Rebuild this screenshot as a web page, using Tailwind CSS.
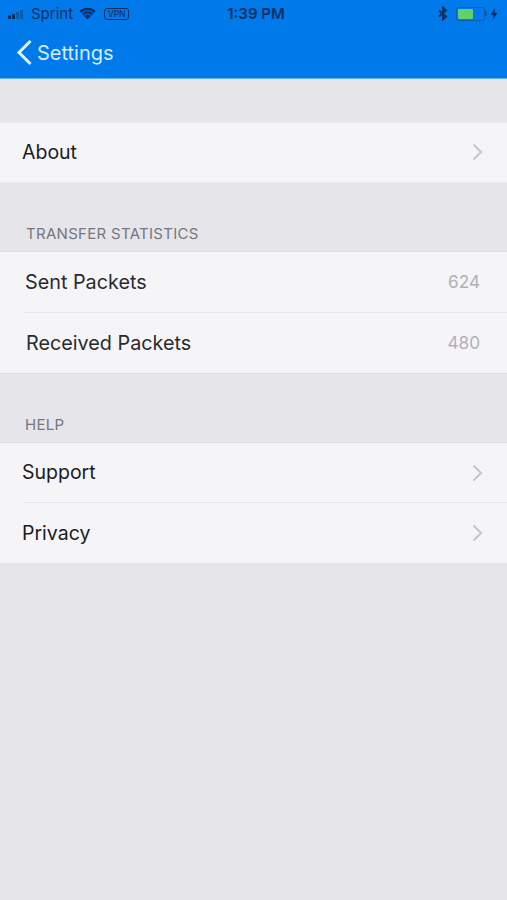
<!DOCTYPE html>
<html lang="en">
<head>
  <meta charset="UTF-8" />
  <meta name="viewport" content="width=device-width, initial-scale=1" />
  <title>Settings</title>
  <script src="https://cdn.jsdelivr.net/npm/@tailwindcss/browser@4"></script>
</head>
<body class="bg-[#e5e5ea] min-h-screen font-['Inter','Liberation_Sans',sans-serif]">
  <!-- Header -->
  <header class="h-[79px] bg-[#007aeb] border-b border-[#5ab0f2]">
    <div class="h-[27px] flex items-center justify-between pl-[8px] pr-[9px] text-[#0c2f63]">
      <div class="flex items-center w-[186px]">
        <svg width="20" height="10" viewBox="0 0 20 10" class="mr-[3px]">
          <rect x="0" y="6.500" width="3" height="3.500" fill="#0c2f63"/>
          <rect x="4" y="5" width="3" height="5" fill="#0c2f63"/>
          <rect x="8" y="3" width="3" height="7" fill="#0c2f63" fill-opacity=".4"/>
          <rect x="12" y="1" width="3" height="9" fill="#0c2f63" fill-opacity=".4"/>
        </svg>
        <span class="text-[15px] leading-none">Sprint</span>
        <svg width="17" height="13" viewBox="0 0 17 13" class="ml-[6px]">
          <path d="M8.500 12.500 L0.500 4 A11.500 11.500 0 0 1 16.500 4 Z" fill="#0c2f63"/>
          <path d="M3 5.800 A8 8 0 0 1 14 5.800" fill="none" stroke="#007aeb" stroke-width="1"/>
          <path d="M5.200 8.200 A5 5 0 0 1 11.800 8.200" fill="none" stroke="#007aeb" stroke-width="1"/>
        </svg>
        <span class="ml-[8px] w-[25px] h-[12px] rounded-[3px] border border-[#0c2f63] text-[8.500px] leading-[10px] text-center font-medium">VPN</span>
      </div>
      <span class="text-[15px] leading-none font-semibold">1:39 PM</span>
      <div class="flex items-center justify-end w-[180px]">
        <svg width="10" height="15" viewBox="0 0 10 15">
          <path d="M1 4.500 L8 10.500 L5 13.500 L5 1.500 L8 4.500 L1 10.500" fill="none" stroke="#0c2f63" stroke-width="1.800"/>
        </svg>
        <div class="ml-[8px] w-[29px] h-[14px] rounded-[3px] border border-[#0b5fae] p-[1px]">
          <div class="w-[15px] h-full bg-[#5fd36a] rounded-[1px]"></div>
        </div>
        <div class="w-[2px] h-[5px] bg-[#0b5fae] rounded-r-[1px]"></div>
        <svg width="8" height="12" viewBox="0 0 8 12" class="ml-[3px]">
          <path d="M5 0 L0.500 7 L3.500 7 L2.800 12 L7.500 4.800 L4.400 4.800 Z" fill="#0c2f63"/>
        </svg>
      </div>
    </div>
    <div class="h-[51px] flex items-center pl-[16px] text-[#d4ecfd]">
      <svg width="17" height="27" viewBox="0 0 17 27">
        <path d="M14.500 2 L3 13.500 L14.500 25" fill="none" stroke="#e3f3fe" stroke-width="3" />
      </svg>
      <span class="ml-[4px] text-[20px] leading-none">Settings</span>
    </div>
  </header>

  <main>
    <!-- About -->
    <section class="mt-[43px] bg-[#f5f5f8] border-y border-[#ececf0]">
      <div class="h-[59px] flex items-center justify-between pl-[22px] pr-[24px]">
        <span class="text-[19.500px] text-[#1c1c1f]">About</span>
        <svg width="11" height="18" viewBox="0 0 11 18" class="-translate-y-px"><path d="M1.500 1.500 L9 9 L1.500 16.500" fill="none" stroke="#c4c4c9" stroke-width="2"/></svg>
      </div>
    </section>

    <!-- Transfer statistics -->
    <h2 class="mt-[41px] pl-[26px] h-[27px] text-[15px] tracking-[0.3px] leading-[20px] text-[#77777d]">TRANSFER STATISTICS</h2>
    <section class="bg-[#f5f5f8] border-y border-[#dcdce1]">
      <div class="h-[60px] flex items-center justify-between pl-[25px] pr-[27px]">
        <span class="text-[19.800px] text-[#2a2a2e] translate-y-px">Sent Packets</span>
        <span class="text-[17.200px] text-[#b0b0b5]">624</span>
      </div>
      <div class="ml-[24px] h-px bg-[#e6e6ea]"></div>
      <div class="h-[60px] flex items-center justify-between pl-[26px] pr-[27px]">
        <span class="text-[19.800px] text-[#2a2a2e] translate-y-px">Received Packets</span>
        <span class="text-[17.200px] text-[#b0b0b5]">480</span>
      </div>
    </section>

    <!-- Help -->
    <h2 class="mt-[41px] pl-[25px] h-[27px] text-[15px] tracking-[0.3px] leading-[20px] text-[#77777d]">HELP</h2>
    <section class="bg-[#f5f5f8] border-t border-[#dcdce1]">
      <div class="h-[59px] flex items-center justify-between pl-[22px] pr-[24px]">
        <span class="text-[19.500px] text-[#1c1c1f]">Support</span>
        <svg width="11" height="18" viewBox="0 0 11 18"><path d="M1.500 1.500 L9 9 L1.500 16.500" fill="none" stroke="#c4c4c9" stroke-width="2"/></svg>
      </div>
      <div class="ml-[24px] h-px bg-[#e6e6ea]"></div>
      <div class="h-[60px] flex items-center justify-between pl-[22px] pr-[24px]">
        <span class="text-[19.500px] text-[#1c1c1f] translate-y-px">Privacy</span>
        <svg width="11" height="18" viewBox="0 0 11 18"><path d="M1.500 1.500 L9 9 L1.500 16.500" fill="none" stroke="#c4c4c9" stroke-width="2"/></svg>
      </div>
    </section>
  </main>
</body>
</html>
